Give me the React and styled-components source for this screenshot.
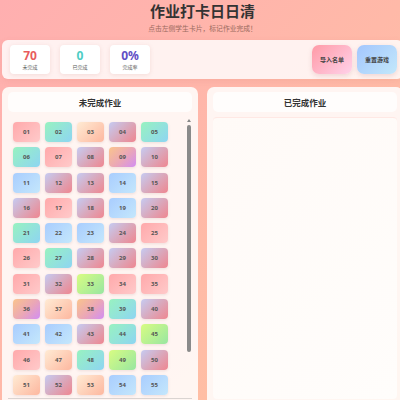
import React from 'react';
import styled, { createGlobalStyle } from 'styled-components';

const GlobalStyle = createGlobalStyle`
  html, body {
    margin: 0;
    padding: 0;
  }
  body {
    min-height: 100vh;
    overflow: hidden;
    background: linear-gradient(135deg, #ffafb0 0%, #ffc3a0 100%);
    font-family: "Noto Sans", "Noto Sans CJK SC", sans-serif;
  }
`;

const gradients = {
  pink: 'linear-gradient(135deg, #ffa9ab 0%, #ffcaca 100%)',
  mint: 'linear-gradient(135deg, #98f2c0 0%, #8ed5f2 100%)',
  peach: 'linear-gradient(135deg, #ffebd4 0%, #fdb79f 100%)',
  lilac: 'linear-gradient(135deg, #c6cbf2 0%, #d9a9bd 50%, #ef8690 100%)',
  sunset: 'linear-gradient(135deg, #fac48c 0%, #eaa6b8 55%, #d28ef3 100%)',
  sky: 'linear-gradient(135deg, #a9cdfe 0%, #c4e7fc 100%)',
  lime: 'linear-gradient(135deg, #d8fc82 0%, #98e6a2 100%)',
};

// colour of each student card, in order
const pattern = [
  'pink', 'mint', 'peach', 'lilac', 'mint',
  'mint', 'pink', 'lilac', 'sunset', 'lilac',
  'sky', 'lilac', 'lilac', 'sky', 'lilac',
  'lilac', 'pink', 'lilac', 'sky', 'lilac',
  'mint', 'sky', 'sky', 'lilac', 'pink',
  'pink', 'mint', 'lilac', 'lilac', 'lilac',
  'pink', 'lilac', 'lime', 'pink', 'pink',
  'sunset', 'peach', 'sunset', 'mint', 'lilac',
  'sky', 'sky', 'lilac', 'mint', 'lime',
  'pink', 'peach', 'mint', 'lime', 'lilac',
  'peach', 'lilac', 'peach', 'sky', 'sky',
  'pink', 'lilac', 'mint', 'sky', 'peach',
  'lilac', 'pink', 'lime', 'sky', 'lilac',
  'mint', 'sunset', 'pink', 'sky', 'lilac',
];

const students = pattern.map((tone, i) => ({
  id: String(i + 1).padStart(2, '0'),
  tone,
}));

const App = () => {
  return (
    <Page>
      <GlobalStyle />
      <Header>
        <h1>作业打卡日日清</h1>
        <p>点击左侧学生卡片，标记作业完成！</p>
      </Header>

      <StatsBar>
        <StatCard>
          <StatNumber $color="#e85c5c">70</StatNumber>
          <StatLabel>未完成</StatLabel>
        </StatCard>
        <StatCard>
          <StatNumber $color="#4ecdc4">0</StatNumber>
          <StatLabel>已完成</StatLabel>
        </StatCard>
        <StatCard>
          <StatNumber $color="#5f4ec4">0%</StatNumber>
          <StatLabel>完成率</StatLabel>
        </StatCard>
        <Spacer />
        <ActionButton $bg="linear-gradient(135deg, #ff9aa6 0%, #ffd2ea 100%)">导入名单</ActionButton>
        <ActionButton $bg="linear-gradient(135deg, #a3c6fd 0%, #c3e8fb 100%)">重置游戏</ActionButton>
      </StatsBar>

      <Panels>
        <Panel>
          <PanelTitle>未完成作业</PanelTitle>
          <ScrollShell>
            <ScrollArea>
              <CardGrid>
                {students.map((s) => (
                  <StudentCard key={s.id} $tone={s.tone}>{s.id}</StudentCard>
                ))}
              </CardGrid>
            </ScrollArea>
            <ScrollArrow />
            <ScrollThumb />
          </ScrollShell>
        </Panel>
        <Panel>
          <PanelTitle>已完成作业</PanelTitle>
          <DoneArea />
        </Panel>
      </Panels>
    </Page>
  );
};

const Page = styled.div`
  width: 401px;
  padding-left: 2px;
`;

const Header = styled.header`
  text-align: center;

  h1 {
    margin: 0;
    font-size: 15px;
    line-height: 22px;
    font-weight: 700;
    color: #333;
  }

  p {
    margin: 1px 0 0;
    font-size: 6.8px;
    line-height: 11px;
    color: #9a6a5e;
  }
`;

const StatsBar = styled.section`
  margin-top: 6px;
  height: 39px;
  box-sizing: border-box;
  padding: 5px 6px 5px 8px;
  display: flex;
  align-items: center;
  gap: 10px;
  border-radius: 6px;
  background: rgba(255, 255, 255, 0.82);
  box-shadow: 0 2px 6px rgba(200, 100, 80, 0.12);
`;

const StatCard = styled.div`
  width: 40px;
  height: 29px;
  border-radius: 4px;
  background: #fff;
  box-shadow: 0 1px 4px rgba(180, 100, 90, 0.15);
  display: flex;
  flex-direction: column;
  align-items: center;
  justify-content: center;
  gap: 2px;
`;

const StatNumber = styled.span`
  font-size: 12px;
  line-height: 12px;
  font-weight: 700;
  color: ${(p) => p.$color};
`;

const StatLabel = styled.span`
  font-size: 5px;
  line-height: 6px;
  color: #555;
`;

const Spacer = styled.div`
  flex: 1;
`;

const ActionButton = styled.button`
  all: unset;
  width: 40px;
  height: 29px;
  margin-left: -5px;
  border-radius: 7px;
  background: ${(p) => p.$bg};
  box-shadow: 0 2px 5px rgba(180, 100, 110, 0.2);
  display: grid;
  place-content: center;
  font-size: 6px;
  font-weight: 700;
  color: #444;
  cursor: pointer;
`;

const Panels = styled.main`
  margin-top: 8px;
  display: grid;
  grid-template-columns: 196px 196px;
  gap: 9px;
`;

const Panel = styled.section`
  height: 320px;
  box-sizing: border-box;
  padding: 5px 6px;
  border-radius: 7px;
  background: rgba(255, 250, 247, 0.93);
  display: flex;
  flex-direction: column;
  gap: 5px;
`;

const PanelTitle = styled.h2`
  margin: 0;
  height: 20px;
  flex-shrink: 0;
  border-radius: 5px;
  background: rgba(255, 255, 255, 0.75);
  display: grid;
  place-content: center;
  font-size: 8.5px;
  font-weight: 700;
  color: #333;
`;

const ScrollShell = styled.div`
  position: relative;
  height: 281px;
  flex-shrink: 0;
  border-bottom: 1px solid rgba(150, 150, 150, 0.35);
`;

const ScrollArea = styled.div`
  height: 100%;
  overflow-y: auto;
  scrollbar-width: none;

  &::-webkit-scrollbar {
    display: none;
  }
`;

const ScrollArrow = styled.span`
  position: absolute;
  top: 2px;
  right: 1px;
  width: 0;
  height: 0;
  border-left: 2px solid transparent;
  border-right: 2px solid transparent;
  border-bottom: 3px solid #888;
`;

const ScrollThumb = styled.span`
  position: absolute;
  top: 8px;
  right: 1px;
  width: 4px;
  height: 227px;
  border-radius: 2px;
  background: #8a8a8a;
`;

const CardGrid = styled.div`
  display: grid;
  grid-template-columns: repeat(5, 27px);
  column-gap: 5px;
  row-gap: 5.3px;
  padding: 5px 0 5px 5px;
`;

const StudentCard = styled.div`
  height: 20px;
  border-radius: 4px;
  background: ${(p) => gradients[p.$tone]};
  box-shadow: 0 1px 3px rgba(150, 90, 90, 0.15);
  display: flex;
  align-items: center;
  justify-content: center;
  font-size: 6px;
  font-weight: 700;
  color: #555;
  cursor: pointer;
`;

const DoneArea = styled.div`
  height: 281px;
  flex-shrink: 0;
  border-radius: 4px;
  border-top: 1px solid rgba(255, 230, 225, 0.9);
  background: linear-gradient(135deg, #fffaf7 0%, #fffdfb 100%);
`;

export default App;
